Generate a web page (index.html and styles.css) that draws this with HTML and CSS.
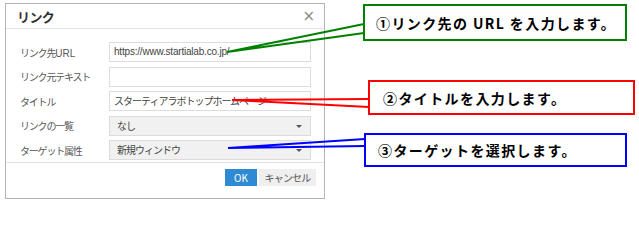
FILE: index.html
```html
<!DOCTYPE html>
<html lang="ja">
<head>
<meta charset="utf-8">
<link rel="stylesheet" href="styles.css">
</head>
<body>
<div class="canvas">
  <div class="dialog">
    <div class="dlg-head">
      <span class="dlg-title">リンク</span>
      <span class="dlg-close">×</span>
    </div>
    <div class="dlg-body">
      <div class="row"><span class="lbl">リンク先<span class="lat">URL</span></span><div class="field url">https://www.startialab.co.jp/</div></div>
      <div class="row"><span class="lbl">リンク元テキスト</span><div class="field"></div></div>
      <div class="row"><span class="lbl">タイトル</span><div class="field jp">スターティアラボトップホームページ</div></div>
      <div class="row"><span class="lbl">リンクの一覧</span><div class="field jp sel">なし<span class="arrow"></span></div></div>
      <div class="row"><span class="lbl">ターゲット属性</span><div class="field jp sel">新規ウィンドウ<span class="arrow"></span></div></div>
    </div>
    <div class="dlg-foot">
      <span class="btn ok">OK</span>
      <span class="btn cancel">キャンセル</span>
    </div>
  </div>

  <svg class="leaders" width="639" height="202" viewBox="0 0 639 202">
    <polyline points="364,24 227,52 364,33" fill="none" stroke="#008000" stroke-width="2"/>
    <polyline points="369,99 232,100 369,107" fill="none" stroke="#ff0000" stroke-width="2"/>
    <polyline points="365,139 228,148 365,146" fill="none" stroke="#0000ff" stroke-width="2"/>
  </svg>

  <div class="callout green">①リンク先の URL を入力します。</div>
  <div class="callout red">②タイトルを入力します。</div>
  <div class="callout blue">③ターゲットを選択します。</div>
</div>
</body>
</html>
```

FILE: styles.css
```css
html, body {
  margin: 0;
  padding: 0;
  background: #ffffff;
}
.canvas {
  position: relative;
  width: 639px;
  height: 202px;
  overflow: hidden;
  padding: 3px 0 0 5px;
  box-sizing: border-box;
  font-family: "Liberation Sans", "Noto Sans CJK JP", sans-serif;
}
.dialog {
  width: 320px;
  height: 196px;
  box-sizing: border-box;
  border: 1px solid #b4b4b4;
  background: #fff;
  display: flex;
  flex-direction: column;
}
.dlg-head {
  height: 24px;
  border-bottom: 1px solid #e2e2e2;
  display: flex;
  align-items: center;
  justify-content: space-between;
  padding: 0 9px 0 11px;
}
.dlg-title {
  font-family: "Noto Sans CJK JP", sans-serif;
  font-weight: bold;
  font-size: 13px;
  color: #333;
  letter-spacing: -0.6px;
}
.dlg-close {
  font-size: 15px;
  color: #8a8a8a;
  font-family: "DejaVu Sans", sans-serif;
  line-height: 1;
}
.dlg-body {
  flex: 1;
  padding: 13px 13px 0 14px;
  display: flex;
  flex-direction: column;
  gap: 4.5px;
}
.row {
  display: flex;
  align-items: center;
  height: 20px;
}
.lbl {
  width: 89px;
  font-size: 10px;
  color: #595959;
  font-family: "Noto Sans CJK JP", sans-serif;
  letter-spacing: -1.2px;
  white-space: nowrap;
}
.lbl .lat {
  font-family: "Liberation Sans", sans-serif;
  letter-spacing: 0;
}
.field {
  position: relative;
  width: 202px;
  height: 20px;
  box-sizing: border-box;
  border: 1px solid #dcdcdc;
  background: #fff;
  font-size: 10px;
  color: #444;
  padding: 0 4px;
  line-height: 18px;
  font-family: "Liberation Sans", "Noto Sans CJK JP", sans-serif;
  white-space: nowrap;
  overflow: hidden;
}
.field.url {
  letter-spacing: -0.2px;
}
.field.jp {
  font-family: "Noto Sans CJK JP", sans-serif;
  letter-spacing: -1px;
}
.field.sel {
  background: #f1f1f1;
  padding-left: 7px;
}
.arrow {
  position: absolute;
  right: 8px;
  top: 8px;
  width: 0;
  height: 0;
  border-left: 3px solid transparent;
  border-right: 3px solid transparent;
  border-top: 3px solid #555;
}
.dlg-foot {
  height: 29px;
  border-top: 1px solid #e2e2e2;
  display: flex;
  justify-content: flex-end;
  align-items: flex-start;
  gap: 2px;
  padding: 6px 8px 0 0;
}
.btn {
  height: 17px;
  line-height: 17px;
  font-size: 10px;
  text-align: center;
  font-family: "Noto Sans CJK JP", sans-serif;
}
.btn.ok {
  width: 32px;
  background: #2e8bd3;
  color: #fff;
}
.btn.cancel {
  width: 57px;
  background: #efefef;
  color: #555;
  letter-spacing: -0.8px;
}
.leaders {
  position: absolute;
  left: 0;
  top: 0;
}
.callout {
  position: absolute;
  box-sizing: border-box;
  background: #fff;
  border: 2px solid;
  font-family: "Noto Sans CJK JP", sans-serif;
  font-weight: bold;
  font-size: 14px;
  color: #000;
  display: flex;
  align-items: center;
  white-space: nowrap;
  letter-spacing: 1.4px;
}
.callout.green {
  left: 363px;
  top: 4px;
  width: 264px;
  height: 37px;
  border-color: #008000;
  padding-left: 11px;
}
.callout.red {
  left: 368px;
  top: 80px;
  width: 267px;
  height: 35px;
  border-color: #ff0000;
  padding-left: 13px;
}
.callout.blue {
  left: 364px;
  top: 133px;
  width: 263px;
  height: 34px;
  border-color: #0000ff;
  padding-left: 12px;
}
```
